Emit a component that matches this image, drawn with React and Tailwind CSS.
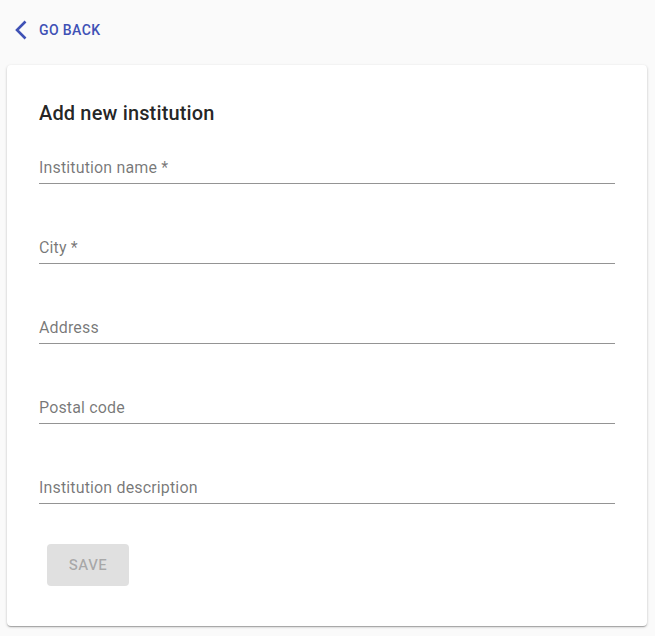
import React from 'react';

const fields = [
  'Institution name *',
  'City *',
  'Address',
  'Postal code',
  'Institution description',
];

const App = () => {
  return (
    <div
      className="min-h-screen bg-[#fafafa] pb-[10px]"
      style={{ fontFamily: 'Roboto, "Liberation Sans", sans-serif' }}
    >
      {/* Go back */}
      <div className="flex h-[65px] items-center pb-[5px]">
        <button className="ml-[14px] flex items-center gap-[12px] text-[#3f51b5]">
          <svg width="13" height="20" viewBox="0 0 13 20" fill="none">
            <polyline points="11.5,1.5 3,10 11.5,18.5" stroke="#3f51b5" strokeWidth="2.6" strokeLinecap="butt" />
          </svg>
          <span className="text-[14px] font-medium uppercase tracking-[0.4px]">Go back</span>
        </button>
      </div>

      {/* Card */}
      <div className="ml-[7px] w-[640px] rounded bg-white px-[32px] pb-[40px] pt-[32px] shadow-[0_1px_3px_0_rgba(0,0,0,0.2),0_1px_1px_0_rgba(0,0,0,0.14),0_2px_1px_-1px_rgba(0,0,0,0.12)]">
        <h2 className="text-[20px] font-medium leading-[32px] tracking-[0.15px] text-[rgba(0,0,0,0.87)]">
          Add new institution
        </h2>
        <div className="mt-[30px] flex flex-col gap-[55px]">
          {fields.map((f) => (
            <div key={f} className="border-b border-[#949494] pb-[7px] pt-[1px]">
              <div className="text-[16px] leading-[16px] tracking-[0.15px] text-[rgba(0,0,0,0.54)]">{f}</div>
            </div>
          ))}
        </div>
        <button
          disabled
          className="ml-[8px] mt-[40px] h-[42px] w-[82px] rounded bg-[#e0e0e0] text-[15px] font-medium uppercase tracking-[0.45px] text-[rgba(0,0,0,0.26)]"
        >
          Save
        </button>
      </div>
    </div>
  );
};

export default App;
